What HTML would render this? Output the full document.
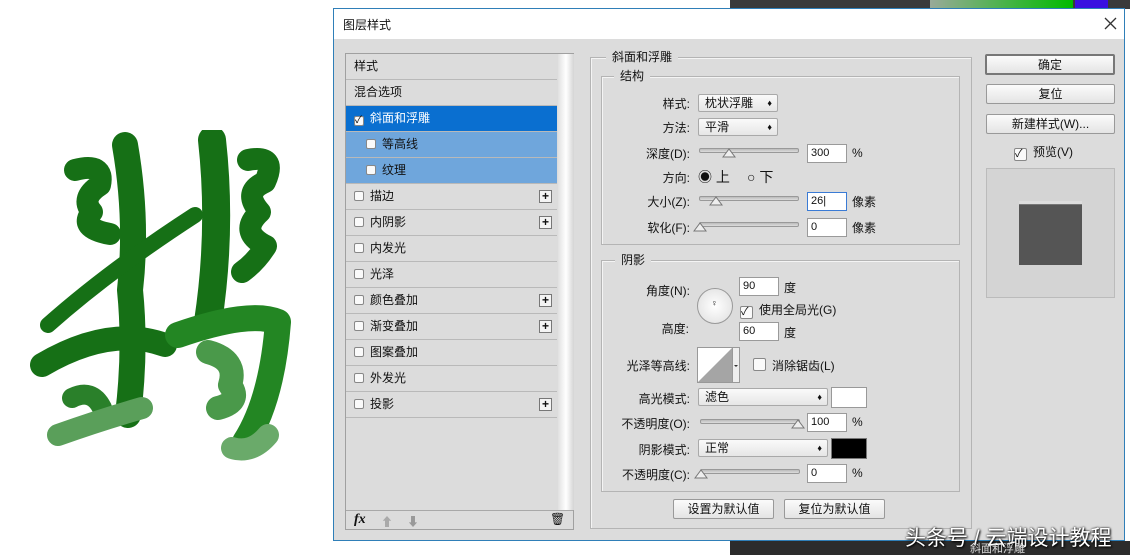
<!DOCTYPE html>
<html><head><meta charset="utf-8"><style>
*{box-sizing:border-box;margin:0;padding:0}
body{width:1130px;height:555px;overflow:hidden;background:#fff;position:relative;font-family:"Liberation Sans","Noto Sans CJK SC",sans-serif;font-size:12px;color:#111}
.a{position:absolute}
.dlg{left:333px;top:8px;width:792px;height:533px;background:#dcdcdc;border:1px solid #2f7fb8}
.title{left:0;top:0;width:790px;height:30px;background:#fff}
.row{position:absolute;left:0;width:211px;height:26px;border-bottom:1px solid #b9b9b9;line-height:25px;padding-left:8px}
.cb{display:inline-block;width:10px;height:10px;border:1px solid #888;background:#fafafa;border-radius:2px;vertical-align:-1px;margin-right:6px}
.plus{position:absolute;right:5px;top:6px;width:13px;height:13px;border:1px solid #777;background:#f4f4f4;font-size:12px;line-height:10px;text-align:center;font-weight:bold}
.grp{border:1px solid #b4b4b4;box-shadow:1px 1px 0 #f4f4f4 inset}
.lbl{position:absolute;text-align:right;width:120px}
.sel{position:absolute;height:18px;border:1px solid #a9a9a9;border-radius:2px;background:linear-gradient(#fafafa,#e6e6e6);padding-left:6px;line-height:16px}
.sel:after{content:"\2666";position:absolute;right:5px;top:0;font-size:9px}
.inp{position:absolute;height:19px;width:40px;border:1px solid #9a9a9a;background:#fff;padding-left:3px;line-height:17px;font-size:11px}
.sl{position:absolute;height:5px;border:1px solid #999;border-radius:2px;background:linear-gradient(#bbb,#ddd)}
.th{position:absolute;width:14px;height:10px}
.btn{position:absolute;height:20px;border:1px solid #999;border-radius:2px;background:linear-gradient(#fbfbfb,#e4e4e4);text-align:center;line-height:18px}
</style></head><body>
<div class="a" style="left:730px;top:0;width:400px;height:9px;background:#3a3a3a"></div>
<div class="a" style="left:930px;top:0;width:143px;height:9px;background:linear-gradient(90deg,#9a9,#0b0)"></div>
<div class="a" style="left:1075px;top:0;width:33px;height:9px;background:#3a10e0"></div>
<div class="a" style="left:730px;top:541px;width:400px;height:14px;background:#2c2c2c"></div>

<svg class="a" style="left:20px;top:130px" width="300" height="340" viewBox="0 0 300 340">
<g fill="none" stroke="#167016" stroke-linecap="round" stroke-linejoin="round">
<path d="M55 40 Q85 32 80 55 Q60 68 72 82 Q58 98 90 104" stroke-width="22"/>
<path d="M105 15 Q118 90 110 160 Q116 220 108 285" stroke-width="26"/>
<path d="M28 195 Q90 140 175 85" stroke-width="16"/>
<path d="M22 235 Q90 195 145 215" stroke-width="24"/>
<path d="M52 268 Q72 258 82 278" stroke="#2a802a" stroke-width="20"/>
<path d="M38 305 Q80 290 122 278" stroke="#5a9f5a" stroke-width="22"/>
<path d="M192 10 Q202 100 188 192" stroke-width="28"/>
<path d="M228 30 Q258 24 245 52 Q222 62 240 82 Q218 102 246 116 Q236 132 222 142" stroke-width="22"/>
<path d="M158 205 Q230 180 258 192 Q252 270 225 312" stroke="#238623" stroke-width="26"/>
<path d="M188 222 Q218 230 210 255 Q222 272 198 278" stroke="#4a994a" stroke-width="24"/>
<path d="M212 318 Q232 324 248 305" stroke="#6aaa6a" stroke-width="22"/>
</g></svg>

<div class="a dlg">
 <div class="a title"><span class="a" style="left:9px;top:7px">图层样式</span>
 <svg class="a" style="left:770px;top:8px" width="13" height="13"><path d="M1 1L12 12M12 1L1 12" stroke="#333" stroke-width="1.3"/></svg></div>
 <div class="a" style="left:11px;top:44px;width:229px;height:477px;border:1px solid #a0a0a0;background:#dcdcdc">
  <div class="a" style="left:212px;top:0;width:16px;height:456px;background:linear-gradient(90deg,#e0e0e0,#fff,#d4d4d4)"></div>
  <div class="row" style="top:0">样式</div>
  <div class="row" style="top:26px">混合选项</div>
  <div class="row" style="top:52px;background:#0a6fd0;color:#fff"><span class="cb" style="font-size:10px;line-height:8px;color:#000">✓</span>斜面和浮雕</div>
  <div class="row" style="top:78px;background:#6fa6dc;padding-left:20px"><span class="cb"></span>等高线</div>
  <div class="row" style="top:104px;background:#6fa6dc;padding-left:20px"><span class="cb"></span>纹理</div>
  <div class="row" style="top:130px"><span class="cb"></span>描边<span class="plus">+</span></div>
  <div class="row" style="top:156px"><span class="cb"></span>内阴影<span class="plus">+</span></div>
  <div class="row" style="top:182px"><span class="cb"></span>内发光</div>
  <div class="row" style="top:208px"><span class="cb"></span>光泽</div>
  <div class="row" style="top:234px"><span class="cb"></span>颜色叠加<span class="plus">+</span></div>
  <div class="row" style="top:260px"><span class="cb"></span>渐变叠加<span class="plus">+</span></div>
  <div class="row" style="top:286px"><span class="cb"></span>图案叠加</div>
  <div class="row" style="top:312px"><span class="cb"></span>外发光</div>
  <div class="row" style="top:338px"><span class="cb"></span>投影<span class="plus">+</span></div>
  <div class="a" style="left:0;top:456px;width:227px;height:20px;border-top:1px solid #a8a8a8">
   <span class="a" style="left:8px;top:1px;font-family:'Liberation Serif';font-style:italic;font-weight:bold;font-size:14px">fx</span>
   <span class="a" style="left:35px;top:2px;color:#aaa">⬆</span><span class="a" style="left:61px;top:2px;color:#999">⬇</span>
   <span class="a" style="left:204px;top:1px;font-size:12px">🗑</span>
  </div>
 </div>
 <div class="a grp" style="left:256px;top:48px;width:382px;height:472px"></div>
 <span class="a" style="left:272px;top:39px;background:#dcdcdc;padding:0 6px">斜面和浮雕</span>
 <div class="a grp" style="left:267px;top:67px;width:359px;height:169px"></div>
 <span class="a" style="left:280px;top:58px;background:#dcdcdc;padding:0 6px">结构</span>
 <div class="lbl" style="left:236px;top:86px">样式:</div><div class="sel" style="left:364px;top:85px;width:80px">枕状浮雕</div>
 <div class="lbl" style="left:236px;top:110px">方法:</div><div class="sel" style="left:364px;top:109px;width:80px">平滑</div>
 <div class="lbl" style="left:236px;top:136px">深度(D):</div><div class="sl" style="left:365px;top:139px;width:100px"></div><svg class="th" style="left:388px;top:139px"><path d="M1 9L7 1L13 9Z" fill="#eee" stroke="#777"/></svg><div class="inp" style="left:473px;top:135px">300</div><span class="a" style="left:518px;top:137px">%</span>
 <div class="lbl" style="left:236px;top:160px">方向:</div><span class="a" style="left:364px;top:158px;font-size:14px">◉ 上</span><span class="a" style="left:413px;top:158px;font-size:14px">○ 下</span>
 <div class="lbl" style="left:236px;top:184px">大小(Z):</div><div class="sl" style="left:365px;top:187px;width:100px"></div><svg class="th" style="left:375px;top:187px"><path d="M1 9L7 1L13 9Z" fill="#eee" stroke="#777"/></svg><div class="inp" style="left:473px;top:183px;border-color:#3a7bd5">26|</div><span class="a" style="left:518px;top:184px">像素</span>
 <div class="lbl" style="left:236px;top:210px">软化(F):</div><div class="sl" style="left:365px;top:213px;width:100px"></div><svg class="th" style="left:359px;top:213px"><path d="M1 9L7 1L13 9Z" fill="#eee" stroke="#777"/></svg><div class="inp" style="left:473px;top:209px">0</div><span class="a" style="left:518px;top:210px">像素</span>

 <div class="a grp" style="left:267px;top:251px;width:359px;height:232px"></div>
 <span class="a" style="left:281px;top:242px;background:#dcdcdc;padding:0 6px">阴影</span>
 <div class="lbl" style="left:236px;top:273px">角度(N):</div>
 <div class="a" style="left:363px;top:279px;width:36px;height:36px;border-radius:50%;border:1px solid #999;background:radial-gradient(#fff,#ddd)"></div><span class="a" style="left:377px;top:289px;font-size:9px">♀</span>
 <div class="inp" style="left:405px;top:268px">90</div><span class="a" style="left:450px;top:270px">度</span>
 <span class="a" style="left:406px;top:292px"><span class="cb" style="width:13px;height:13px;font-size:11px;line-height:11px">✓</span>使用全局光(G)</span>
 <div class="lbl" style="left:236px;top:311px;width:119px">高度:</div>
 <div class="inp" style="left:405px;top:313px">60</div><span class="a" style="left:450px;top:315px">度</span>
 <div class="lbl" style="left:236px;top:348px">光泽等高线:</div>
 <svg class="a" style="left:363px;top:338px" width="43" height="37"><rect x=".5" y=".5" width="35" height="35" fill="#fff" stroke="#999"/><path d="M1 35 L35 1 L35 35Z" fill="#a5a5a5"/><rect x="35.5" y=".5" width="7" height="35" fill="#eee" stroke="#999"/><path d="M37 18h4l-2 2z" fill="#333"/></svg>
 <span class="a" style="left:419px;top:348px"><span class="cb" style="width:13px;height:13px"></span>消除锯齿(L)</span>
 <div class="lbl" style="left:236px;top:381px">高光模式:</div><div class="sel" style="left:364px;top:379px;width:130px">滤色</div><div class="a" style="left:497px;top:378px;width:36px;height:21px;background:#fff;border:1px solid #999"></div>
 <div class="lbl" style="left:236px;top:406px">不透明度(O):</div><div class="sl" style="left:366px;top:410px;width:100px"></div><svg class="th" style="left:457px;top:410px"><path d="M1 9L7 1L13 9Z" fill="#eee" stroke="#777"/></svg><div class="inp" style="left:473px;top:404px">100</div><span class="a" style="left:518px;top:406px">%</span>
 <div class="lbl" style="left:236px;top:432px">阴影模式:</div><div class="sel" style="left:364px;top:430px;width:130px">正常</div><div class="a" style="left:497px;top:429px;width:36px;height:21px;background:#000;border:1px solid #777"></div>
 <div class="lbl" style="left:236px;top:457px">不透明度(C):</div><div class="sl" style="left:366px;top:460px;width:100px"></div><svg class="th" style="left:360px;top:460px"><path d="M1 9L7 1L13 9Z" fill="#eee" stroke="#777"/></svg><div class="inp" style="left:473px;top:455px">0</div><span class="a" style="left:518px;top:457px">%</span>
 <div class="btn" style="left:339px;top:490px;width:101px">设置为默认值</div>
 <div class="btn" style="left:450px;top:490px;width:101px">复位为默认值</div>
 <div class="btn" style="left:651px;top:45px;width:130px;height:21px;border:2px solid #777">确定</div>
 <div class="btn" style="left:652px;top:75px;width:129px">复位</div>
 <div class="btn" style="left:652px;top:105px;width:129px">新建样式(W)...</div>
 <span class="a" style="left:680px;top:134px"><span class="cb" style="width:13px;height:13px;font-size:11px;line-height:11px">✓</span>预览(V)</span>
 <div class="a" style="left:652px;top:159px;width:129px;height:130px;border:1px solid #bbb;background:#d4d4d4"></div>
 <div class="a" style="left:685px;top:192px;width:63px;height:64px;background:#555;border-top:3px solid #ddd;box-shadow:inset 0 1px 0 #777"></div>
</div>
<div class="a" style="left:905px;top:522px;font-size:21px;color:#fff;text-shadow:0 0 2px #000,1px 1px 2px #000">头条号 / 云端设计教程</div>
<div class="a" style="left:970px;top:540px;font-size:11px;color:#ddd">斜面和浮雕</div>
</body></html>
